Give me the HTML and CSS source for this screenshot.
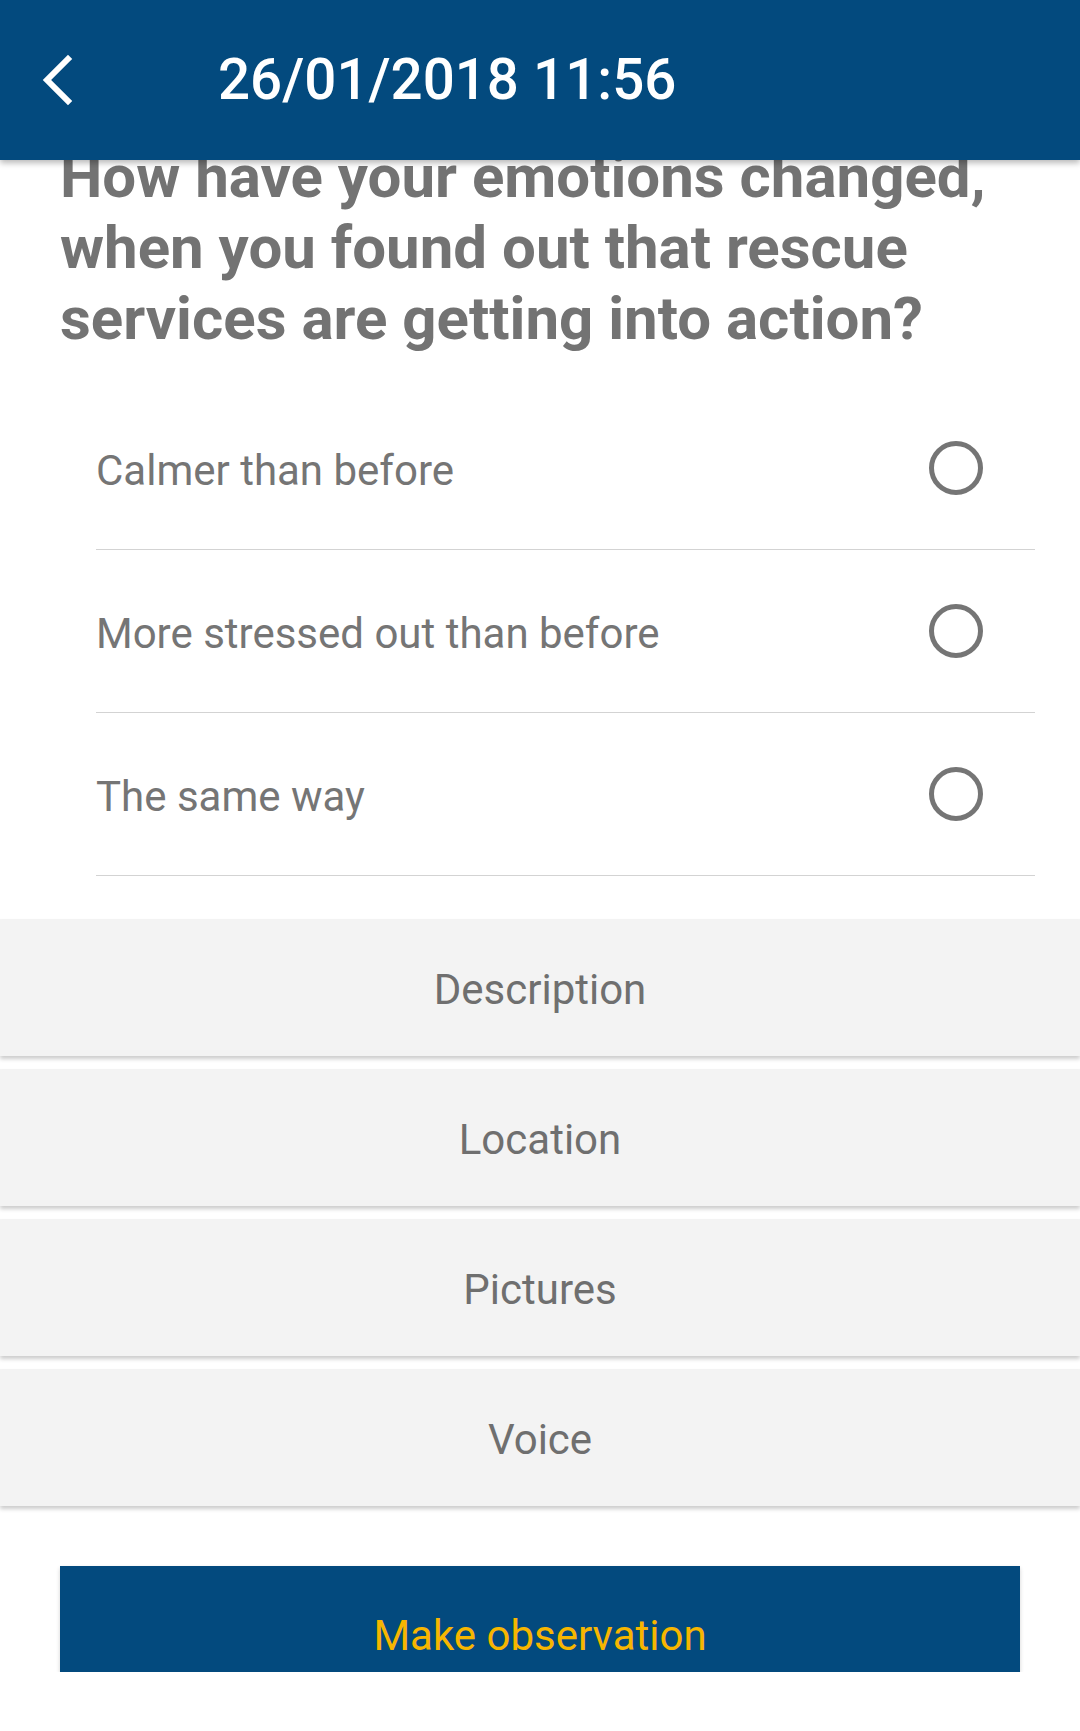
FILE: index.html
```html
<!DOCTYPE html>
<html lang="en">
<head>
<meta charset="utf-8">
<title>Observation</title>
<link rel="stylesheet" href="styles.css">
</head>
<body>
<header class="app-bar">
  <svg class="back" width="40" height="60" viewBox="0 0 40 60" aria-hidden="true">
    <polyline points="30,9 9,30 30,51" fill="none" stroke="#ffffff" stroke-width="6" stroke-linecap="square" stroke-linejoin="miter"/>
  </svg>
  <h1 class="title">26/01/2018 11:56</h1>
</header>
<main class="content">
  <p class="question">How have your emotions changed, when you found out that rescue services are getting into action?</p>
  <ul class="options">
    <li class="option"><span class="option-label">Calmer than before</span><span class="radio"></span></li>
    <li class="option"><span class="option-label">More stressed out than before</span><span class="radio"></span></li>
    <li class="option"><span class="option-label">The same way</span><span class="radio"></span></li>
  </ul>
  <div class="tiles">
    <div class="tile">Description</div>
    <div class="tile">Location</div>
    <div class="tile">Pictures</div>
    <div class="tile">Voice</div>
  </div>
  <div class="action">Make observation</div>
</main>
</body>
</html>
```
FILE: styles.css
```css
html, body {
  margin: 0;
  padding: 0;
  background: #ffffff;
}
body {
  width: 1080px;
  font-family: Roboto, "Noto Sans", Arial, sans-serif;
  overflow: hidden;
}
.app-bar {
  position: relative;
  z-index: 2;
  height: 160px;
  background: #034a7e;
  display: flex;
  align-items: center;
  padding-left: 38px;
  box-sizing: border-box;
  box-shadow: 0 3px 6px rgba(0, 0, 0, 0.28);
}
.back {
  display: block;
  flex: none;
}
.title {
  margin: 0 0 0 140px;
  font-size: 56.5px;
  font-weight: 500;
  color: #ffffff;
  letter-spacing: 0;
}
.content {
  position: relative;
  z-index: 1;
}
.question {
  margin: -19px 0 0;
  padding: 0 30px 0 60px;
  font-size: 60px;
  font-weight: 700;
  line-height: 71px;
  color: #737373;
}
.options {
  list-style: none;
  margin: 33px 45px 0 96px;
  padding: 0;
}
.option {
  height: 162px;
  border-bottom: 1px solid #d3d3d3;
  display: flex;
  align-items: center;
  justify-content: space-between;
}
.option-label {
  font-size: 42px;
  color: #757575;
  padding-top: 4px;
}
.radio {
  width: 44px;
  height: 44px;
  border: 5.5px solid #757575;
  border-radius: 50%;
  margin-right: 52px;
  flex: none;
}
.tiles {
  margin-top: 44px;
  display: flex;
  flex-direction: column;
  gap: 14px;
}
.tile {
  height: 136px;
  background: #f3f3f3;
  display: flex;
  align-items: center;
  justify-content: center;
  font-size: 42px;
  color: #6f6f6f;
  padding-top: 3px;
  box-sizing: border-box;
  box-shadow: 0 3px 4px rgba(0, 0, 0, 0.2), 0 -1px 1px rgba(0, 0, 0, 0.04);
}
.action {
  margin: 60px 60px 0;
  height: 106px;
  box-sizing: border-box;
  padding-top: 45px;
  background: #034a7e;
  color: #f7b600;
  font-size: 42px;
  text-align: center;
  box-shadow: 0 2px 4px rgba(0, 0, 0, 0.18);
}
```
